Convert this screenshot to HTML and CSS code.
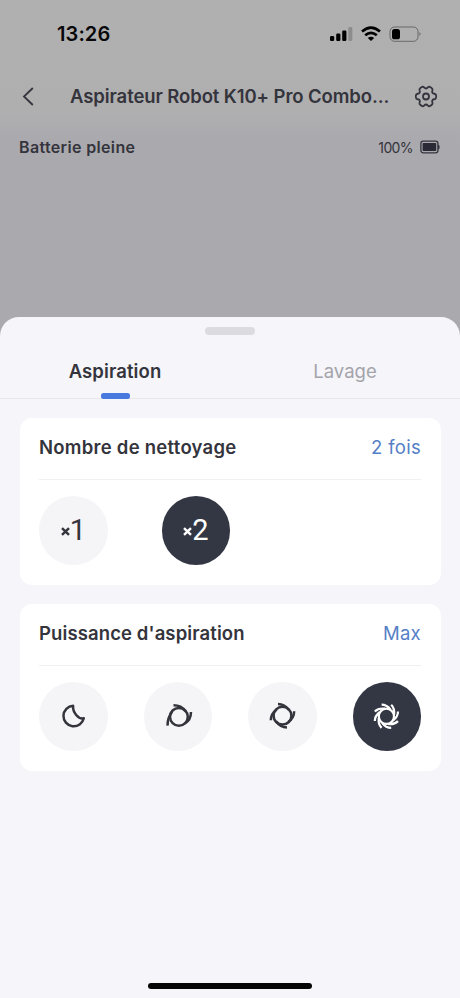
FILE: index.html
```html
<!DOCTYPE html>
<html lang="fr">
<head>
<meta charset="utf-8">
<title>Aspirateur Robot</title>
<link rel="stylesheet" href="styles.css">
</head>
<body>
<div class="screen">
  <div class="status">
    <span class="time">13:26</span>
    <svg class="status-icons" width="94" height="18" viewBox="0 0 94 18">
      <rect x="1" y="11" width="4.200" height="5" rx="1.200"/><rect x="7.200" y="8.500" width="4.200" height="7.500" rx="1.200"/><rect x="13.200" y="5.500" width="4.200" height="10.500" rx="1.200"/><rect x="19.300" y="2" width="4" height="14" rx="1.200" opacity=".2"/>
      <g fill="none" stroke="#000" stroke-width="2.700"><path d="M33 6.600Q42 -1.400 51 6.600"/><path d="M36.200 10.200Q42 5.400 47.800 10.200"/></g><path d="M38.800 13Q42 10.400 45.200 13L42 16Z"/>
      <rect x="61" y="2" width="28" height="14.300" rx="4.500" fill="none" stroke="#000" stroke-opacity=".4"/><rect x="63" y="4" width="8" height="10.300" rx="2.600"/><path d="M90.500 7Q92.500 9 90.500 11Z" opacity=".5"/>
    </svg>
  </div>
  <div class="nav">
    <svg class="back" width="12" height="20" viewBox="0 0 12 20"><path d="M10.800 1L2 9.500L10.800 18"/></svg>
    <h1 class="title">Aspirateur Robot K10+ Pro Combo...</h1>
    <svg class="gear" width="26" height="26" viewBox="0 0 26 26"><path d="M9.700 2.700C11 2.700 11.200 4.500 13 4.500C14.800 4.500 15 2.700 16.300 2.700Q18.600 3.500 19.400 5C20 6.300 18.600 7.300 19.300 8.700C20 10.100 22 9.400 22.800 10.500Q23.800 12.500 22.800 14.500C22 15.600 20 14.900 19.300 16.300C18.600 17.700 20 18.700 19.400 20Q18.600 21.500 16.300 22.300C15 22.300 14.800 20.500 13 20.500C11.200 20.500 11 22.300 9.700 22.300Q7.400 21.500 6.600 20C6 18.700 7.400 17.700 6.700 16.300C6 14.900 4 15.600 3.200 14.500Q2.200 12.500 3.200 10.500C4 9.400 6 10.100 6.700 8.700C7.400 7.300 6 6.300 6.600 5Q7.400 3.500 9.700 2.700Z"/><circle cx="13" cy="12.500" r="3"/></svg>
  </div>
  <div class="device">
    <span class="state">Batterie pleine</span>
    <span class="percent">100%</span>
    <svg width="20" height="14" viewBox="0 0 20 14"><rect x=".9" y="1.200" width="17" height="11.600" rx="2.200" fill="none" stroke="#34343e" stroke-width="1.300"/><rect x="2.600" y="3" width="13.600" height="8" rx=".8" fill="#292a36"/><path d="M18 4.500Q19.700 4.500 19.700 7T18 9.500Z" fill="#34343e"/></svg>
  </div>
  <main class="sheet">
    <div class="handle"></div>
    <div class="tabs"><div class="tab active">Aspiration</div><div class="tab">Lavage</div></div>
    <section class="card">
      <div class="head"><h2 class="count-title">Nombre de nettoyage</h2><span class="value">2 fois</span></div>
      <div class="options counts">
        <div class="option"><svg class="times" width="9" height="9" viewBox="0 0 9 9"><path d="M1 1.200L8 7.800M8 1.200L1 7.800"/></svg><span class="number">1</span></div>
        <div class="option selected"><svg class="times" width="9" height="9" viewBox="0 0 9 9"><path d="M1 1.200L8 7.800M8 1.200L1 7.800"/></svg><span class="number">2</span></div>
      </div>
    </section>
    <section class="card">
      <div class="head"><h2 class="power-title">Puissance d'aspiration</h2><span class="value">Max</span></div>
      <div class="options">
        <div class="option"><svg class="icon" width="34" height="34" viewBox="-17 -17 34 34"><path d="M.1 -10.300A10.300 10.300 0 1 0 10.800 2.300C5.500 3.600 -.6 -3.500 .1 -10.300Z"/></svg></div>
        <div class="option"><svg class="icon" width="34" height="34" viewBox="-17 -17 34 34"><g transform="translate(.9 .8)"><circle r="8.900"/><path d="M-5.400 -11.500Q2.500 -11.500 6.500 -5.600M12.100 -4.800Q12 3.500 6 6.500M-11.300 8.800Q-11.500 1 -6.800 -5"/></g></svg></div>
        <div class="option"><svg class="icon" width="34" height="34" viewBox="-17 -17 34 34"><g transform="translate(.5 -.3)"><circle r="8.900"/><path id="blade" d="M-4.500 -11.700Q2.300 -11.500 6.300 -5.800"/><use href="#blade" transform="rotate(90)"/><use href="#blade" transform="rotate(180)"/><use href="#blade" transform="rotate(270)"/></g></svg></div>
        <div class="option selected"><svg class="icon max" width="34" height="34" viewBox="-17 -17 34 34"><g transform="translate(-.6 .3)"><circle r="7.600"/><path id="fin" d="M-4.800 -11.600Q.5 -11.600 4.300 -6.500"/><use href="#fin" transform="rotate(45)"/><use href="#fin" transform="rotate(90)"/><use href="#fin" transform="rotate(135)"/><use href="#fin" transform="rotate(180)"/><use href="#fin" transform="rotate(225)"/><use href="#fin" transform="rotate(270)"/><use href="#fin" transform="rotate(315)"/></g></svg></div>
      </div>
    </section>
    <div class="home"></div>
  </main>
</div>
</body>
</html>
```
FILE: styles.css
```css
* { box-sizing: border-box; }
body { margin: 0; font-family: Inter, "Liberation Sans", sans-serif; color: #34343c; }
h1, h2 { margin: 0; font-weight: 600; }
svg { flex: none; }
.screen { width: 460px; height: 998px; display: flex; flex-direction: column; overflow: hidden; background: linear-gradient(#b0b0b0 0, #afafb0 110px, #aaa9ae 140px, #aaa9ae 100%); }
.status { height: 68px; display: flex; align-items: center; justify-content: space-between; padding: 0 37px 0 57px; }
.time { font-size: 20px; font-weight: 600; color: #08080a; letter-spacing: .1px; }
.nav { height: 57px; display: flex; align-items: center; padding: 0 21px 0 22px; }
.back { fill: none; stroke: #34343e; stroke-width: 1.8; }
.title { flex: 1; margin-left: 36px; padding-bottom: 1px; font-size: 18.5px; line-height: 23px; white-space: nowrap; letter-spacing: -.09px; }
.gear { fill: none; stroke: #34343e; stroke-width: 1.8; stroke-linejoin: round; }
.device { height: 44px; display: flex; align-items: center; padding: 0 20px 0 19px; }
.state { flex: 1; font-size: 16px; font-weight: 600; letter-spacing: .35px; }
.percent { font-size: 14px; margin-right: 7px; letter-spacing: -.6px; }
.sheet { margin-top: 148px; height: 681px; background: #f5f5fa; border-radius: 19px 19px 0 0; display: flex; flex-direction: column; align-items: center; padding-top: 10px; }
.handle { width: 50px; height: 8px; border-radius: 4px; background: #dcdce0; flex: none; }
.tabs { width: 100%; height: 64px; margin-bottom: 19px; display: grid; grid-template-columns: 1fr 1fr; border-bottom: 1px solid #e8e8ec; flex: none; }
.tab { display: flex; flex-direction: column; align-items: center; padding-top: 24px; font-size: 18.5px; line-height: 24px; color: #a4a4aa; letter-spacing: 0; }
.active { font-weight: 600; color: #34343c; letter-spacing: .1px; }
.active::after { content: ""; width: 29px; height: 6px; flex: none; margin-top: 10px; border-radius: 2.5px; background: #4879df; }
.card { width: 421px; height: 167px; margin-bottom: 19px; padding: 0 19.5px; background: #fff; border-radius: 12px; flex: none; }
.head { height: 62px; padding-bottom: 4px; display: flex; align-items: center; justify-content: space-between; border-bottom: 1px solid #f1f1f3; font-size: 18.5px; line-height: 24px; }
.head h2 { font-size: 18.5px; }
.head .count-title { letter-spacing: .26px; }
.head .power-title { letter-spacing: .11px; }
.value { color: #5580c6; letter-spacing: .3px; }
.options { display: flex; justify-content: space-between; margin-top: 16px; }
.counts { justify-content: flex-start; gap: 54px; }
.option { width: 68.5px; height: 68.5px; border-radius: 50%; background: #f5f5f8; display: flex; align-items: center; justify-content: center; }
.selected { background: #333643; color: #fff; }
.times { fill: none; stroke: currentColor; stroke-width: 2.5; margin-top: 3px; }
.number { font-family: Roboto, sans-serif; font-size: 29px; line-height: 34px; letter-spacing: -.5px; }
.icon { fill: none; stroke: currentColor; stroke-width: 2.5; stroke-linejoin: round; }
.max { stroke-width: 2.2; }
.home { width: 164px; height: 6px; border-radius: 3px; background: #050505; margin-top: auto; margin-bottom: 9px; flex: none; }
```
